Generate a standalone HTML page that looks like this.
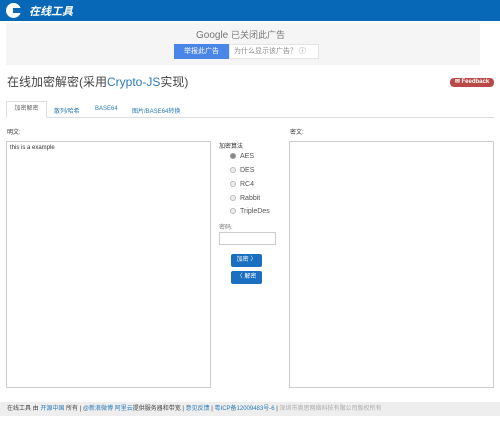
<!DOCTYPE html>
<html><head><meta charset="utf-8"><style>
*{box-sizing:border-box;margin:0;padding:0}
body{width:500px;height:421px;overflow:hidden;background:#fff;font-family:"Liberation Sans","Noto Sans CJK SC",sans-serif;font-size:7px;color:#333;position:relative}
.abs{position:absolute}
.hdr{left:0;top:0;width:500px;height:21px;background:#0868b8}
.ad{left:6px;top:23px;width:474px;height:42px;background:#f5f5f5}
ta{display:block}
.box{border:1px solid #ccc;background:#fff}
.rad{width:6px;height:6px;border-radius:50%;border:1px solid #bbb;background:#eee;display:inline-block;margin-right:4px;vertical-align:middle}
.opt{left:230px;font-size:7px;color:#555}
</style></head><body>
<div class="abs hdr">
 <div class="abs" style="left:6px;top:3px;width:15px;height:15px;border-radius:50%;background:#fff"></div>
 <div class="abs" style="left:13px;top:8px;width:9px;height:5px;background:#0868b8"></div>
 <div class="abs" style="left:29px;top:3px;color:#fff;font-size:11px;font-style:italic;font-weight:bold">在线工具</div>
</div>
<div class="abs ad">
 <div class="abs" style="left:190px;top:5px;font-size:10px;color:#777">Google <span style="font-size:9px">已关闭此广告</span></div>
 <div class="abs" style="left:168px;top:21px;width:55px;height:15px;background:#4a86e8;color:#fff;font-size:7px;line-height:15px;text-align:center">举报此广告</div>
 <div class="abs" style="left:223px;top:21px;width:90px;height:15px;background:#fff;border:1px solid #e4e4e4;color:#888;font-size:7px;line-height:13px;padding-left:4px">为什么显示该广告？ ⓘ</div>
</div>
<div class="abs" style="left:7px;top:73px;font-size:12px;color:#444">在线加密解密(采用<span style="color:#2a7ab8">Crypto-JS</span>实现)</div>
<div class="abs" style="left:450px;top:78px;width:44px;height:9px;border-radius:4px;background:#b94a48;color:#fff;font-size:6px;font-weight:bold;line-height:9px;text-align:center">✉ Feedback</div>
<div class="abs" style="left:6px;top:117px;width:488px;border-top:1px solid #ddd"></div>
<div class="abs" style="left:6px;top:101px;width:41px;height:17px;border:1px solid #ddd;border-bottom-color:#fff;background:#fff;font-size:6px;color:#666;line-height:15px;text-align:center">加密解密</div>
<div class="abs" style="left:54px;top:106px;font-size:6px;color:#2a7ab8">散列/哈希</div>
<div class="abs" style="left:95px;top:106px;font-size:6px;color:#2a7ab8">BASE64</div>
<div class="abs" style="left:132px;top:106px;font-size:6px;color:#2a7ab8">图片/BASE64转换</div>
<div class="abs" style="left:7px;top:127px;font-size:6px">明文:</div>
<div class="abs box" style="left:6px;top:141px;width:205px;height:247px;padding:3px;font-size:6px">this is a example</div>
<div class="abs" style="left:219px;top:141px;font-size:6px">加密算法</div>
<div class="abs opt" style="top:153px"><span class="rad" style="background:#888;border-color:#999"></span>AES</div>
<div class="abs opt" style="top:167px"><span class="rad"></span>DES</div>
<div class="abs opt" style="top:181px"><span class="rad"></span>RC4</div>
<div class="abs opt" style="top:195px"><span class="rad"></span>Rabbit</div>
<div class="abs opt" style="top:208px"><span class="rad"></span>TripleDes</div>
<div class="abs" style="left:219px;top:222px;font-size:6px;color:#777">密码:</div>
<div class="abs box" style="left:219px;top:232px;width:57px;height:13px"></div>
<div class="abs" style="left:231px;top:254px;width:31px;height:13px;background:#1a6fc0;border-radius:2px;color:#fff;font-size:6px;line-height:13px;text-align:center">加密 〉</div>
<div class="abs" style="left:231px;top:271px;width:31px;height:13px;background:#1a6fc0;border-radius:2px;color:#fff;font-size:6px;line-height:13px;text-align:center">〈 解密</div>
<div class="abs" style="left:290px;top:127px;font-size:6px">密文:</div>
<div class="abs box" style="left:289px;top:141px;width:205px;height:247px"></div>
<div class="abs" style="left:0;top:402px;width:500px;height:14px;background:#eee;font-size:6px;line-height:14px;padding-left:7px;color:#444;white-space:nowrap">在线工具 由 <span style="color:#2a7ab8">开源中国</span> 所有 | <span style="color:#2a7ab8">@新浪微博</span> <span style="color:#2a7ab8">阿里云</span>提供服务器和带宽 | <span style="color:#2a7ab8">意见反馈</span> | <span style="color:#2a7ab8">粤ICP备12009483号-6</span> | <span style="color:#aaa">深圳市奥思网络科技有限公司版权所有</span></div>
</body></html>
